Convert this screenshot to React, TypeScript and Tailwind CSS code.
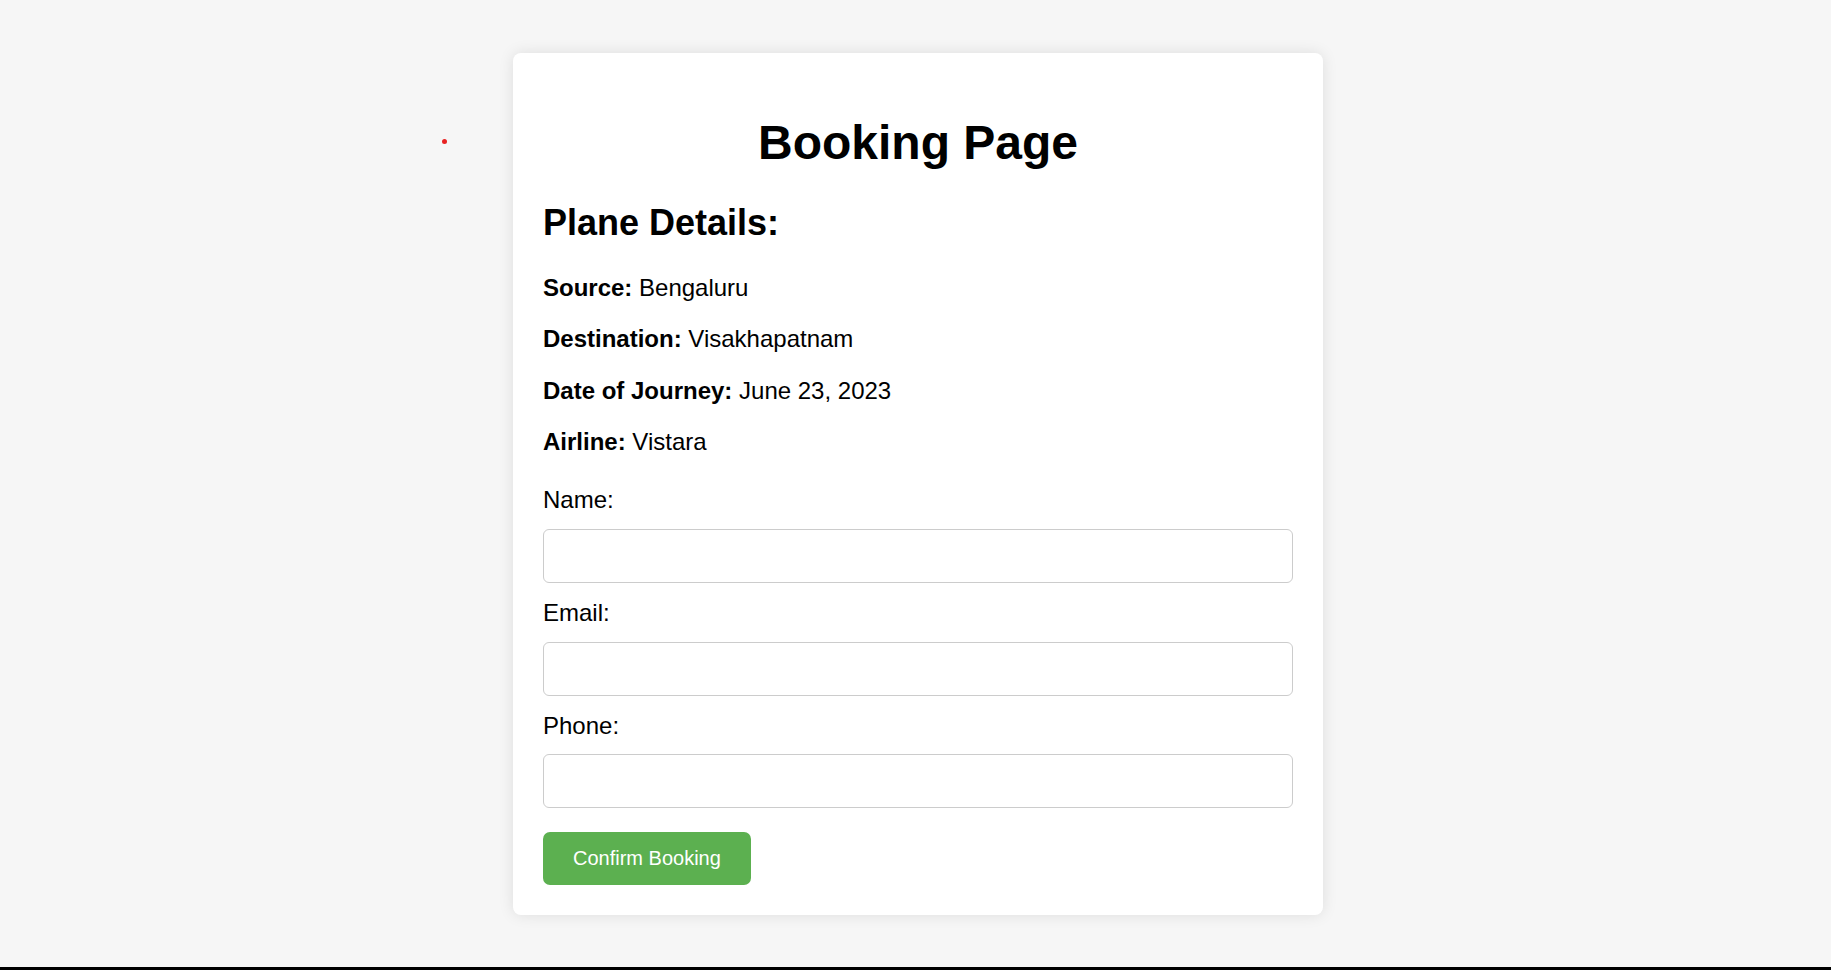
import React from 'react'

const details = [
  { label: 'Source:', value: 'Bengaluru' },
  { label: 'Destination:', value: 'Visakhapatnam' },
  { label: 'Date of Journey:', value: 'June 23, 2023' },
  { label: 'Airline:', value: 'Vistara' },
]

const fields = [
  { id: 'name', label: 'Name:', type: 'text' },
  { id: 'email', label: 'Email:', type: 'email' },
  { id: 'phone', label: 'Phone:', type: 'tel' },
]

export default function App() {
  return (
    <div
      className="relative min-h-[970px] bg-[#f6f6f6] text-black"
      style={{ fontFamily: '"Liberation Sans", Arial, sans-serif' }}
    >
      {/* stray red dot on the left */}
      <span className="absolute left-[442px] top-[139px] size-[5px] rounded-full bg-[#e82222]" />

      <div className="flex flex-col items-center pt-[53px] pb-[52px] pl-[5px]">
        <div className="w-[810px] rounded-[8px] bg-white p-[30px] shadow-[0_0_15px_rgba(0,0,0,0.1)]">
          <h1 className="mt-[32px] mb-[32px] text-center text-[48px] font-bold leading-[55.2px]">Booking Page</h1>
          <h2 className="mb-[30px] text-[36px] font-bold leading-[41.4px]">Plane Details:</h2>

          <div className="flex flex-col gap-[24px]">
            {details.map((d) => (
              <p key={d.label} className="text-[24px] leading-[27.6px]">
                <strong className="font-bold">{d.label}</strong> {d.value}
              </p>
            ))}
          </div>

          <form className="mt-[30.4px] flex flex-col" onSubmit={(e) => e.preventDefault()}>
            {fields.map((f) => (
              <div key={f.id} className="flex flex-col">
                <label htmlFor={f.id} className="mb-[15px] text-[24px] leading-[27.6px]">
                  {f.label}
                </label>
                <input
                  id={f.id}
                  type={f.type}
                  className="mb-[16px] h-[54px] w-full rounded-[6px] border border-[#cccccc] bg-white px-[12px] text-[24px] outline-none"
                />
              </div>
            ))}
            <div className="pt-[8px]">
              <button
                type="submit"
                className="h-[53px] rounded-[7px] bg-[#5cb050] px-[30px] text-[20px] leading-[23px] text-white"
              >
                Confirm Booking
              </button>
            </div>
          </form>
        </div>
      </div>

      <div className="h-[3px] bg-black" />
    </div>
  )
}
